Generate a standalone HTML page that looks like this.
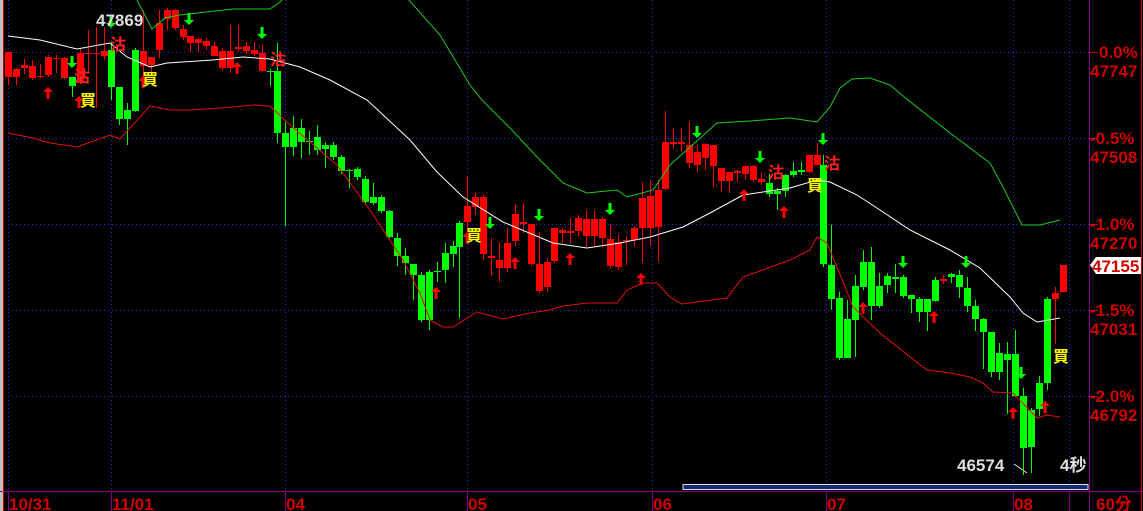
<!DOCTYPE html><html><head><meta charset="utf-8"><style>
html,body{margin:0;padding:0;background:#000;width:1143px;height:511px;overflow:hidden}
svg{display:block}
text{font-family:"Liberation Sans","Noto Sans CJK TC",sans-serif;font-weight:bold}
</style></head><body>
<svg id="s" width="1143" height="511" xmlns="http://www.w3.org/2000/svg">
<rect width="1143" height="511" fill="#000"/>
<rect x="0" y="0" width="3" height="511" fill="#c0c0c0"/>
<rect x="3" y="0" width="1" height="511" fill="#c00"/>
<line x1="1141.5" y1="0" x2="1141.5" y2="511" stroke="#c00" stroke-width="1"/>
<g stroke="#2828e0" stroke-dasharray="1,3" stroke-width="1">
<line x1="8" y1="52.5" x2="1089" y2="52.5"/><line x1="8" y1="138.5" x2="1089" y2="138.5"/><line x1="8" y1="224.5" x2="1089" y2="224.5"/><line x1="8" y1="310.5" x2="1089" y2="310.5"/><line x1="8" y1="396.5" x2="1089" y2="396.5"/>
<line x1="8.5" y1="0" x2="8.5" y2="491"/><line x1="111.5" y1="0" x2="111.5" y2="491"/><line x1="285.5" y1="0" x2="285.5" y2="491"/><line x1="467.5" y1="0" x2="467.5" y2="491"/><line x1="652.5" y1="0" x2="652.5" y2="491"/><line x1="826.5" y1="0" x2="826.5" y2="491"/><line x1="1013.5" y1="0" x2="1013.5" y2="491"/><line x1="1069.5" y1="0" x2="1069.5" y2="491"/>
</g>
<g stroke="#c00" stroke-width="1"><line x1="1090" y1="52.5" x2="1098" y2="52.5"/><line x1="1090" y1="138.5" x2="1098" y2="138.5"/><line x1="1090" y1="224.5" x2="1098" y2="224.5"/><line x1="1090" y1="310.5" x2="1098" y2="310.5"/><line x1="1090" y1="396.5" x2="1098" y2="396.5"/></g>
<g id="c"></g>
<polyline fill="none" stroke="#fff" stroke-width="1" points="8,36 40,40 77,49 110,43 127,57 150,67 167,63 213,60 243,57 270,59 300,67 330,80 367,100 410,140 437,172 463,197 503,222 553,243 587,248 620,243 650,237 683,227 710,213 743,195 790,188 817,180 830,182 857,195 883,212 910,230 950,250 980,268 1010,297 1023,313 1037,322 1060,318"/>
<polyline fill="none" stroke="#1ec81e" stroke-width="1" points="137,0 152,29 165,18 180,15 233,9 270,9 280,2 284,-2"/>
<polyline fill="none" stroke="#1ec81e" stroke-width="1" points="408,-1 440,35 470,85 482,100 510,128 537,157 563,183 587,193 617,190 627,197 653,190 670,165 717,123 750,121 790,118 817,122 830,107 840,88 852,79 870,78 890,85 908,100 950,133 990,163 1003,187 1022,225 1040,225 1060,220"/>
<polyline fill="none" stroke="#e01010" stroke-width="1" points="8,133 33,138 50,143 77,147 110,135 120,139 150,106 170,110 193,110 233,107 253,105 270,106 290,125 337,165 370,210 403,260 420,293 430,320 443,327 453,327 477,312 503,319 530,313 550,310 563,306 587,303 617,303 627,290 643,283 657,283 670,297 682,304 727,298 743,277 757,272 790,260 810,250 817,237 827,243 837,267 853,307 880,333 910,357 927,370 950,373 970,377 983,383 993,392 1013,393 1037,418 1047,415 1060,417"/>
<g id="m"></g>
<text x="96" y="26" fill="#ddd" font-size="17">47869</text>
<text x="957" y="471" fill="#ddd" font-size="17">46574</text>
<line x1="1014" y1="464" x2="1027" y2="473" stroke="#ddd"/>
<text x="1060" y="471" fill="#ddd" font-size="17">4秒</text>
<rect x="683" y="484.5" width="405" height="5" fill="#142a78" stroke="#e0e0e0" stroke-width="1"/>
<line x1="0" y1="491.5" x2="1143" y2="491.5" stroke="#800080"/>
<line x1="1089.5" y1="0" x2="1089.5" y2="511" stroke="#800080"/>
<g stroke="#800080"><line x1="8.5" y1="491" x2="8.5" y2="511"/><line x1="111.5" y1="491" x2="111.5" y2="511"/><line x1="285.5" y1="491" x2="285.5" y2="511"/><line x1="467.5" y1="491" x2="467.5" y2="511"/><line x1="652.5" y1="491" x2="652.5" y2="511"/><line x1="826.5" y1="491" x2="826.5" y2="511"/><line x1="1013.5" y1="491" x2="1013.5" y2="511"/><line x1="1069.5" y1="491" x2="1069.5" y2="511"/></g>
<g fill="#d00000" font-size="17">
<text x="9" y="510">10/31</text><text x="112" y="510">11/01</text><text x="286" y="510">04</text><text x="468" y="510">05</text><text x="653" y="510">06</text><text x="827" y="510">07</text><text x="1014" y="510">08</text><text x="1096" y="510">60分</text>
<text x="1099" y="58">0.0%</text><text x="1090" y="77">47747</text>
<text x="1090" y="144">-0.5%</text><text x="1090" y="163">47508</text>
<text x="1090" y="230">-1.0%</text><text x="1090" y="249">47270</text>
<text x="1090" y="316">-1.5%</text><text x="1090" y="335">47031</text>
<text x="1090" y="402">-2.0%</text><text x="1090" y="421">46792</text>
</g>
<polygon points="1090,265 1096,257 1141,257 1141,274 1096,274" fill="#fff"/>
<text x="1092" y="272" fill="#d00000" font-size="17">47155</text>
</svg>
<script>
var R='#ff0000',G='#00ff00';
var d=[
[8,'r',52,77,52,85],[16,'r',69,77,68,85],[24,'r',65,68,59,74],[32,'r',66,78,60,80],[40,'r',76,77,64,78],[48,'r',57,75,55,77],[56,'r',58,59,55,73],[64,'r',58,78,57,79],[72,'g',77,86,77,97],[80,'r',53,83,48,84],[88,'r',53,54,30,72],[96,'r',53,54,27,108],[104,'r',51,56,27,60],
[111,'g',50,87,43,100],[119,'g',87,119,87,125],[127,'g',110,119,103,145],[135,'g',50,111,48,112],[143,'r',51,66,10,87],[151,'r',57,65,57,73],[159,'r',23,50,10,58],[167,'r',10,19,8,30],[175,'r',10,28,9,30],[183,'r',29,37,25,40],[190,'r',36,43,36,52],[198,'r',39,43,38,52],[206,'r',41,46,38,50],[214,'r',46,56,42,56],[222,'r',51,68,48,70],[230,'r',51,68,25,73],[238,'r',47,49,25,52],[246,'r',46,51,42,54],[254,'r',50,54,42,56],[262,'r',53,71,45,72],[270,'g',71,72,69,86],[277,'g',71,133,43,143],
[285,'g',133,147,122,226],[293,'g',128,147,116,156],[301,'g',128,142,119,158],[309,'g',141,142,131,155],[317,'g',137,150,125,155],[325,'g',145,149,142,168],[333,'g',145,157,142,160],[341,'g',157,171,155,174],[349,'g',170,171,169,188],[357,'g',169,177,167,180],[365,'g',179,202,176,204],[373,'g',197,203,183,205],[381,'g',197,211,195,213],[389,'g',211,237,210,238],[397,'g',238,256,233,266],[405,'g',256,263,248,275],[413,'g',264,275,264,300],[421,'g',275,320,272,322],[429,'g',272,320,270,330],[437,'g',271,272,262,282],[445,'g',253,270,243,283],[453,'g',246,254,241,267],[459,'g',223,247,221,318],
[467,'r',206,222,176,238],[475,'r',197,207,193,215],[483,'r',197,254,195,260],[491,'r',256,258,238,275],[499,'r',260,268,242,282],[507,'r',243,268,228,272],[515,'r',214,241,205,246],[523,'r',222,224,203,233],[531,'r',224,264,224,266],[539,'r',264,291,232,293],[547,'r',262,287,258,292],[554,'r',228,261,228,263],[562,'r',230,233,228,243],[570,'r',231,233,218,243],[578,'r',218,231,215,237],[586,'r',219,236,210,247],[594,'r',219,236,210,246],[602,'r',219,238,217,247],[610,'r',239,266,224,268],[618,'r',242,267,234,270],[626,'r',240,241,236,265],[634,'r',228,240,226,246],[642,'r',198,228,182,263],[650,'r',196,228,180,246],[658,'r',190,227,180,262],
[665,'r',142,189,111,190],[673,'r',142,144,128,149],[681,'r',142,144,128,152],[689,'r',145,163,121,168],[697,'r',152,165,145,172],[705,'r',144,158,143,170],[713,'r',145,166,145,187],[721,'r',168,181,168,192],[729,'r',172,181,172,193],[737,'r',171,173,170,182],[745,'r',166,174,165,180],[753,'r',166,180,165,182],[761,'r',179,182,173,185],[769,'g',183,194,174,197],[777,'g',191,194,188,210],[785,'g',175,191,174,197],[793,'g',171,175,162,177],[801,'g',170,172,162,175],[809,'r',155,172,155,173],[817,'r',155,165,143,165],[823,'g',165,264,155,267],
[831,'g',265,299,225,310],[839,'g',298,358,292,360],[847,'g',319,358,300,358],[855,'g',286,320,275,357],[863,'g',262,287,250,290],[871,'g',262,306,247,320],[879,'g',286,306,273,308],[887,'g',276,285,273,293],[895,'g',277,279,264,293],[903,'g',277,296,275,298],[911,'g',295,299,295,313],[919,'g',299,312,297,322],[927,'g',299,312,299,331],[935,'g',280,301,277,302],[943,'r',279,281,275,284],[951,'g',274,277,273,283],[959,'g',275,287,270,298],[967,'g',288,306,277,312],[975,'g',306,319,300,331],[983,'g',319,332,318,369],[991,'g',332,372,332,377],[999,'g',353,372,343,380],[1007,'g',354,360,342,414],[1015,'g',354,396,330,397],[1023,'g',396,448,388,475],[1031,'g',410,447,408,473],[1039,'g',383,409,376,416],[1047,'g',299,383,297,390],[1055,'r',293,299,287,344],[1063,'r',265,292,265,292]
];
var s='';
d.forEach(function(c){var col=c[1]=='r'?R:G;var x=c[0];var t=Math.min(c[2],c[3]),b=Math.max(c[2],c[3]);if(b-t<1)b=t+1;
s+='<line x1="'+(x+0.5)+'" y1="'+c[4]+'" x2="'+(x+0.5)+'" y2="'+c[5]+'" stroke="'+col+'"/>';
s+='<rect x="'+(x-3)+'" y="'+t+'" width="7" height="'+(b-t)+'" fill="'+col+'"/>';});
document.getElementById('c').innerHTML=s;
var m='';
function up(x,y){m+='<path d="M'+x+' '+(y-6)+'L'+(x+5)+' '+(y-1)+'L'+(x+1.5)+' '+(y-1)+'L'+(x+1.5)+' '+(y+6)+'L'+(x-1.5)+' '+(y+6)+'L'+(x-1.5)+' '+(y-1)+'L'+(x-5)+' '+(y-1)+'Z" fill="#ff0000"/>';}
function dn(x,y){m+='<path d="M'+x+' '+(y+6)+'L'+(x+5)+' '+(y+1)+'L'+(x+1.5)+' '+(y+1)+'L'+(x+1.5)+' '+(y-6)+'L'+(x-1.5)+' '+(y-6)+'L'+(x-1.5)+' '+(y+1)+'L'+(x-5)+' '+(y+1)+'Z" fill="#00ff00"/>';}
[[48,93],[79,102],[143,82],[237,68],[436,293],[515,263],[570,259],[641,279],[467,238],[744,195],[784,212],[863,308],[934,317],[1013,413],[1045,407]].forEach(function(p){up(p[0],p[1]);});
[[72,62],[111,22],[189,19],[262,33],[490,223],[539,215],[610,209],[697,132],[760,157],[823,139],[903,262],[966,262],[1021,373]].forEach(function(p){dn(p[0],p[1]);});
function tx(x,y,t,c){m+='<text x="'+x+'" y="'+y+'" fill="'+c+'" font-size="16">'+t+'</text>';}
tx(74,82,'沽','#ff2020');tx(110,50,'沽','#ff2020');tx(270,65,'沽','#ff2020');tx(768,178,'沽','#ff2020');tx(824,169,'沽','#ff2020');
tx(80,106,'買','#ffff00');tx(142,85,'買','#ffff00');tx(466,241,'買','#ffff00');tx(807,191,'買','#ffff00');tx(1053,362,'買','#ffff00');
document.getElementById('m').innerHTML=m;
</script>
</body></html>
